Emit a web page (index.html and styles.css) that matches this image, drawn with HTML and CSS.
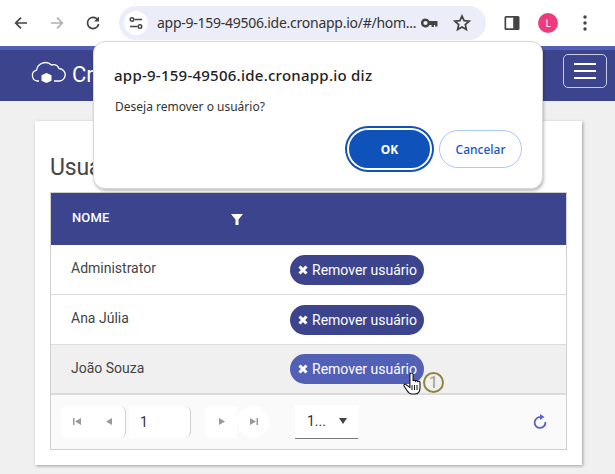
FILE: index.html
```html
<!DOCTYPE html>
<html lang="pt">
<head>
<meta charset="utf-8">
<title>Usuários</title>
<link rel="stylesheet" href="styles.css">
</head>
<body>
<header class="chrome">
  <svg class="tool" width="16" height="16" viewBox="0 0 16 16"><path d="M14 8H3M8 2.7 2.7 8 8 13.3" fill="none" stroke="#444" stroke-width="1.7"/></svg>
  <svg class="tool fwd" width="16" height="16" viewBox="0 0 16 16"><path d="M2 8h11M8 2.7 13.3 8 8 13.3" fill="none" stroke="#b0b0b0" stroke-width="1.7"/></svg>
  <svg class="tool reload" width="16" height="16" viewBox="0 0 16 16"><path d="M13 5.2A5.6 5.6 0 1 0 13.6 9" fill="none" stroke="#444" stroke-width="1.7"/><path d="M14 1.6v5h-5z" fill="#444"/></svg>
  <div class="omnibox">
    <span class="site-chip"><svg width="14" height="14" viewBox="0 0 14 14"><g fill="none" stroke="#444" stroke-width="1.4"><path d="M5.5 3.5H13M1 10.5h7.5"/><circle cx="3" cy="3.5" r="1.8"/><circle cx="11" cy="10.5" r="1.8"/></g></svg></span>
    <span class="url">app-9-159-49506.ide.cronapp.io/#/hom...</span>
    <svg class="key" width="18" height="10" viewBox="0 0 18 10"><path d="M4.5.5a4.5 4.5 0 1 0 4 6.500h2v2h2.400V7H14v1.500h2.500V3H8.500A4.500 4.500 0 0 0 4.500.5z" fill="#444"/><circle cx="4.500" cy="5" r="2.100" fill="#ebeef8"/></svg>
    <svg class="star" width="18" height="18" viewBox="0 0 18 18"><path d="m9 2 2.100 4.700 5 .5-3.800 3.400 1.100 5L9 13l-4.400 2.600 1.100-5L1.900 7.200l5-.5z" fill="none" stroke="#444" stroke-width="1.700"/></svg>
  </div>
  <svg class="panel" width="16" height="16" viewBox="0 0 16 16"><rect x=".5" y="1" width="15" height="14" rx="1.500" fill="#444"/><rect x="2.200" y="2.700" width="7" height="10.600" fill="#fff"/></svg>
  <span class="avatar">L</span>
  <svg class="menu-dots" width="4" height="16" viewBox="0 0 4 16"><circle cx="2" cy="2" r="1.700" fill="#444"/><circle cx="2" cy="8" r="1.700" fill="#444"/><circle cx="2" cy="14" r="1.700" fill="#444"/></svg>
</header>

<nav class="navbar">
  <div class="brand">
    <svg width="36" height="27" viewBox="0 0 36 27"><path d="M8 23H6.500A5.500 5.500 0 0 1 5.500 12.200 9 9 0 0 1 20.500 7 6.500 6.500 0 0 1 28 10.500 6.300 6.300 0 0 1 29 23h-6" fill="none" stroke="#fff" stroke-width="1.300"/><path d="m15.500 15 5 2.300v5.400l-5 2.300-5-2.300v-5.400z" fill="#fff"/></svg>
    <span>Cro</span>
  </div>
  <button class="burger" type="button" aria-label="Menu"><i></i><i></i><i></i></button>
</nav>

<main class="page">
  <section class="card">
    <h1>Usuários</h1>
    <div class="grid">
      <div class="grid-head">
        <span class="col-name">NOME</span>
        <svg width="12" height="12" viewBox="0 0 12 12"><path d="M0 1h12L7.500 6.500V12h-3V6.500z" fill="#fff"/></svg>
      </div>
      <div class="row"><span class="col-name">Administrator</span><button class="remove" type="button"><svg width="10" height="10" viewBox="0 0 10 10"><path d="M1.500 1.500l7 7M8.500 1.500l-7 7" stroke="#fff" stroke-width="3"/></svg>Remover usuário</button></div>
      <div class="row"><span class="col-name">Ana Júlia</span><button class="remove" type="button"><svg width="10" height="10" viewBox="0 0 10 10"><path d="M1.500 1.500l7 7M8.500 1.500l-7 7" stroke="#fff" stroke-width="3"/></svg>Remover usuário</button></div>
      <div class="row hover"><span class="col-name">João Souza</span><button class="remove" type="button"><svg width="10" height="10" viewBox="0 0 10 10"><path d="M1.500 1.500l7 7M8.500 1.500l-7 7" stroke="#fff" stroke-width="3"/></svg>Remover usuário</button></div>
      <div class="pager">
        <span class="pg-group">
          <span class="pg-btn"><svg width="9" height="9" viewBox="0 0 9 9"><path d="M0 1h1.500v7H0zM8 1v7L2 4.500z" fill="#999"/></svg></span>
          <span class="pg-btn"><svg width="7" height="9" viewBox="0 0 7 9"><path d="M6 1v7L0 4.500z" fill="#999"/></svg></span>
        </span>
        <span class="pg-input">1</span>
        <span class="pg-group next">
          <span class="pg-btn"><svg width="7" height="9" viewBox="0 0 7 9"><path d="M1 1v7l6-3.500z" fill="#999"/></svg></span>
          <span class="pg-btn round"><svg width="9" height="9" viewBox="0 0 9 9"><path d="M1 1v7l6-3.500zM7.500 1H9v7H7.500z" fill="#999"/></svg></span>
        </span>
        <span class="pg-size"><span>1...</span><svg width="8" height="6" viewBox="0 0 8 6"><path d="M0 0h8L4 6z" fill="#444"/></svg></span>
        <svg class="pg-refresh" width="14" height="15" viewBox="0 0 14 15"><path d="M7.800 3.200A5.400 5.400 0 1 0 12.400 8" fill="none" stroke="#5a62c4" stroke-width="1.800"/><path d="M7 0v6l4.500-3z" fill="#5a62c4"/></svg>
      </div>
    </div>
  </section>
</main>

<div class="dialog" role="dialog">
  <h2>app-9-159-49506.ide.cronapp.io diz</h2>
  <p>Deseja remover o usuário?</p>
  <div class="actions">
    <button class="ok" type="button">OK</button>
    <button class="cancel" type="button">Cancelar</button>
  </div>
</div>

<svg class="cursor" width="19" height="24" viewBox="0 0 19 24"><path d="M8.500 1c1 0 1.600.7 1.600 1.700V9c.5-1 2-1 2.400.2.600-.9 2-.8 2.400.4.700-.7 2.100-.4 2.100 1.100V16c0 3.500-2 6-5 6H9c-2 0-3.500-1-5-3.500L1 14c-.6-1.200 1-2.500 2-1.300l3.900 2.800V2.700C6.900 1.700 7.500 1 8.500 1z" fill="#fff" stroke="#111" stroke-width="1.100"/><path d="M9 13v5M11.500 13v5M14 13v5" stroke="#111"/></svg>
<span class="callout">1</span>
</body>
</html>
```
FILE: styles.css
```css
* { box-sizing: border-box; }
html, body { margin: 0; height: 474px; overflow: hidden; }
body { width: 615px; background: #f0f0f0; font-family: Roboto, "Liberation Sans", sans-serif; position: relative; }
button { font: inherit; cursor: pointer; }

.chrome { height: 46px; background: #fff; display: flex; align-items: center; }
.tool { flex: none; margin-left: 13px; }
.fwd { margin-left: 20px; }
.reload { margin-left: 20px; }
.omnibox { width: 367px; height: 34px; margin-left: 18px; background: #ebeef8; border-radius: 17px; display: flex; align-items: center; padding-left: 5px; flex: none; }
.site-chip { width: 24px; height: 24px; border-radius: 50%; background: #fff; display: flex; align-items: center; justify-content: center; }
.url { margin-left: 9px; font: 14px/20px "Noto Sans", sans-serif; letter-spacing: -.26px; color: #333; white-space: nowrap; width: 264px; }
.key { flex: none; }
.star { margin-left: 14px; flex: none; }
.panel { margin-left: 18px; }
.avatar { width: 20px; height: 20px; margin-left: 18px; border-radius: 50%; background: #ee3b7c; color: #fff; font: 10px/20px "Noto Sans", sans-serif; text-align: center; }
.menu-dots { margin-left: 25px; }

.navbar { height: 55px; background: #3c448d; border-top: 4px solid #5260b5; display: flex; align-items: center; justify-content: space-between; padding: 0 8px 9px 31px; }
.brand { display: flex; align-items: center; gap: 5px; color: #fff; font-size: 22px; }
.brand span { margin-top: 6px; }
.burger { width: 44px; height: 34px; background: transparent; border: 1px solid #c9cce0; border-radius: 5px; display: flex; flex-direction: column; justify-content: center; gap: 5px; padding: 0 10px; }
.burger i { display: block; height: 2px; background: #fff; }

.page { padding: 20px 33px 0 35px; }
.card { height: 344px; background: #fff; padding: 33px 15px 0; box-shadow: 1px 1px 3px rgba(0,0,0,.35); }
h1 { margin: 0 0 10px; font-size: 23px; line-height: 28px; font-weight: 400; letter-spacing: -.2px; color: #444; }
.grid { border: 1px solid #cfcfcf; height: 258px; display: flex; flex-direction: column; }
.grid-head { height: 52px; flex: none; background: #3c448d; color: #fff; display: flex; align-items: center; font-size: 13px; font-weight: 500; letter-spacing: .15px; }
.grid-head .col-name { width: 180px; padding-left: 21px; padding-bottom: 4px; }
.row { height: 50px; flex: none; display: flex; align-items: center; border-bottom: 1px solid #dcdcdc; font-size: 14px; color: #444; }
.row .col-name { width: 239px; padding-left: 20px; margin-top: -3px; }
.row.hover { background: #f0f0f0; border-bottom: 2px solid #dcdcdc; }
.remove { height: 30px; width: 134px; border: 0; border-radius: 15px; background: #3c448d; color: #fff; font-size: 14px; padding: 0 0 0 8px; white-space: nowrap; display: flex; align-items: center; gap: 4px; }
.hover .remove { background: #5260b5; }

.pager { flex: 1; background: #fafafa; display: flex; align-items: center; padding: 0 0 1px 10px; }
.pg-group { display: flex; }
.pg-btn { width: 32px; height: 32px; background: #fff; display: flex; align-items: center; justify-content: center; }
.pg-group .pg-btn:first-child { border-radius: 5px 0 0 5px; }
.pg-group:first-child .pg-btn:last-child { width: 33px; border-right: 1px solid #d0d0d0; border-radius: 0 6px 6px 0; }
.pg-btn.round { border-radius: 50%; }
.pg-input { width: 62px; height: 32px; margin-left: 3px; background: #fff; border-right: 1px solid #cfcfcf; border-radius: 0 6px 6px 0; font-size: 14px; line-height: 32px; padding-left: 11px; color: #333; }
.next { margin-left: 14px; }
.pg-size { width: 63px; height: 34px; margin-left: 26px; background: #fff; border-bottom: 1px solid #777; display: flex; align-items: center; justify-content: space-between; padding: 0 11px 0 12px; font-size: 14px; color: #333; }
.pg-refresh { margin-left: auto; margin-right: 19px; }

.dialog { position: absolute; left: 93px; top: 41px; width: 450px; height: 148px; background: #fff; border: 1px solid #d8d8d8; border-radius: 12px; box-shadow: 1px 2px 3px rgba(0,0,0,.25); padding: 23px 20px 0; font-family: "Noto Sans", sans-serif; }
.dialog h2 { margin: 0 0 13px; font-size: 15px; line-height: 20px; font-weight: 500; letter-spacing: .25px; color: #222; }
.dialog p { margin: 0 0 0 1px; font-size: 12px; line-height: 18px; color: #333; }
.actions { display: flex; justify-content: flex-end; align-items: center; gap: 7px; margin-top: 12px; }
.ok { width: 85px; height: 42px; border: 2px solid #fff; border-radius: 21px; background: #0f52ba; color: #fff; font-size: 12px; font-weight: 700; box-shadow: 0 0 0 2px #0f52ba; }
.cancel { width: 83px; height: 38px; background: #fff; border: 1px solid #a8c7fa; border-radius: 19px; color: #1a56c4; font-size: 12px; font-weight: 500; }

.cursor { position: absolute; left: 403px; top: 372px; }
.callout { position: absolute; left: 423px; top: 372px; width: 21px; height: 21px; border: 2px solid #8f8540; border-radius: 50%; color: #a39c6c; font-size: 16px; line-height: 18px; text-align: center; }
```
